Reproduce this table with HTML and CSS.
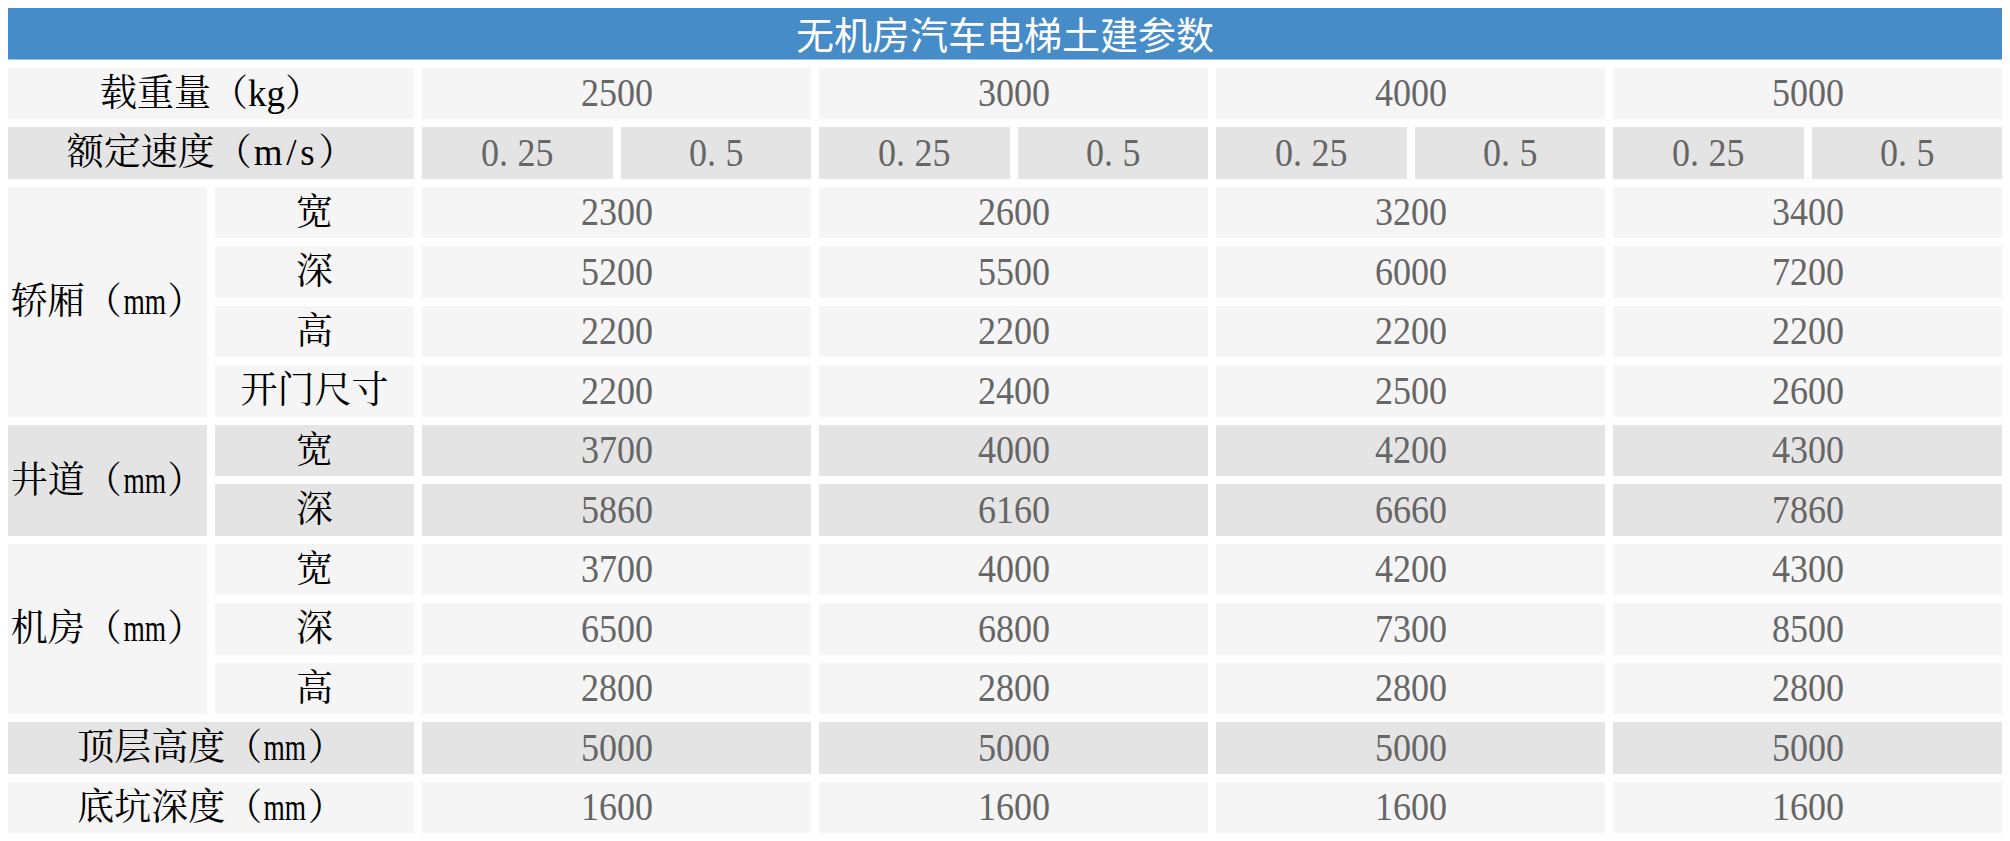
FILE: index.html
```html
<!DOCTYPE html>
<html lang="zh-CN">
<head>
<meta charset="utf-8">
<title>无机房汽车电梯土建参数</title>
<link rel="stylesheet" href="styles.css">
</head>
<body>
<div class="sheet">
  <div class="title">无机房汽车电梯土建参数</div>

  <div class="cell lbl light w2">载重量（kg）</div>
  <div class="cell val light w2"><span class="n">2500</span></div>
  <div class="cell val light w2"><span class="n">3000</span></div>
  <div class="cell val light w2"><span class="n">4000</span></div>
  <div class="cell val light w2"><span class="n">5000</span></div>

  <div class="cell lbl dark w2">额定速度（<span class="ms">m/s</span>）</div>
  <div class="cell val dark"><span class="n">0<span class="dot">.</span>25</span></div>
  <div class="cell val dark"><span class="n">0<span class="dot">.</span>5</span></div>
  <div class="cell val dark"><span class="n">0<span class="dot">.</span>25</span></div>
  <div class="cell val dark"><span class="n">0<span class="dot">.</span>5</span></div>
  <div class="cell val dark"><span class="n">0<span class="dot">.</span>25</span></div>
  <div class="cell val dark"><span class="n">0<span class="dot">.</span>5</span></div>
  <div class="cell val dark"><span class="n">0<span class="dot">.</span>25</span></div>
  <div class="cell val dark"><span class="n">0<span class="dot">.</span>5</span></div>

  <div class="cell lbl light h4">轿厢（<span class="mm">mm</span>）</div>
  <div class="cell lbl light">宽</div>
  <div class="cell val light w2"><span class="n">2300</span></div>
  <div class="cell val light w2"><span class="n">2600</span></div>
  <div class="cell val light w2"><span class="n">3200</span></div>
  <div class="cell val light w2"><span class="n">3400</span></div>
  <div class="cell lbl light">深</div>
  <div class="cell val light w2"><span class="n">5200</span></div>
  <div class="cell val light w2"><span class="n">5500</span></div>
  <div class="cell val light w2"><span class="n">6000</span></div>
  <div class="cell val light w2"><span class="n">7200</span></div>
  <div class="cell lbl light">高</div>
  <div class="cell val light w2"><span class="n">2200</span></div>
  <div class="cell val light w2"><span class="n">2200</span></div>
  <div class="cell val light w2"><span class="n">2200</span></div>
  <div class="cell val light w2"><span class="n">2200</span></div>
  <div class="cell lbl light">开门尺寸</div>
  <div class="cell val light w2"><span class="n">2200</span></div>
  <div class="cell val light w2"><span class="n">2400</span></div>
  <div class="cell val light w2"><span class="n">2500</span></div>
  <div class="cell val light w2"><span class="n">2600</span></div>

  <div class="cell lbl dark h2">井道（<span class="mm">mm</span>）</div>
  <div class="cell lbl dark">宽</div>
  <div class="cell val dark w2"><span class="n">3700</span></div>
  <div class="cell val dark w2"><span class="n">4000</span></div>
  <div class="cell val dark w2"><span class="n">4200</span></div>
  <div class="cell val dark w2"><span class="n">4300</span></div>
  <div class="cell lbl dark">深</div>
  <div class="cell val dark w2"><span class="n">5860</span></div>
  <div class="cell val dark w2"><span class="n">6160</span></div>
  <div class="cell val dark w2"><span class="n">6660</span></div>
  <div class="cell val dark w2"><span class="n">7860</span></div>

  <div class="cell lbl light h3">机房（<span class="mm">mm</span>）</div>
  <div class="cell lbl light">宽</div>
  <div class="cell val light w2"><span class="n">3700</span></div>
  <div class="cell val light w2"><span class="n">4000</span></div>
  <div class="cell val light w2"><span class="n">4200</span></div>
  <div class="cell val light w2"><span class="n">4300</span></div>
  <div class="cell lbl light">深</div>
  <div class="cell val light w2"><span class="n">6500</span></div>
  <div class="cell val light w2"><span class="n">6800</span></div>
  <div class="cell val light w2"><span class="n">7300</span></div>
  <div class="cell val light w2"><span class="n">8500</span></div>
  <div class="cell lbl light">高</div>
  <div class="cell val light w2"><span class="n">2800</span></div>
  <div class="cell val light w2"><span class="n">2800</span></div>
  <div class="cell val light w2"><span class="n">2800</span></div>
  <div class="cell val light w2"><span class="n">2800</span></div>

  <div class="cell lbl dark w2">顶层高度（<span class="mm">mm</span>）</div>
  <div class="cell val dark w2"><span class="n">5000</span></div>
  <div class="cell val dark w2"><span class="n">5000</span></div>
  <div class="cell val dark w2"><span class="n">5000</span></div>
  <div class="cell val dark w2"><span class="n">5000</span></div>

  <div class="cell lbl light w2">底坑深度（<span class="mm">mm</span>）</div>
  <div class="cell val light w2"><span class="n">1600</span></div>
  <div class="cell val light w2"><span class="n">1600</span></div>
  <div class="cell val light w2"><span class="n">1600</span></div>
  <div class="cell val light w2"><span class="n">1600</span></div>
</div>
</body>
</html>
```

FILE: styles.css
```css
html, body {
  margin: 0;
  padding: 0;
  background: #ffffff;
}

.sheet {
  box-sizing: border-box;
  width: 100%;
  height: 841px;
  padding: 8px;
  display: grid;
  grid-template-columns: 199px 199px repeat(8, 1fr);
  grid-template-rows: repeat(14, 1fr);
  gap: 8px;
}

.title {
  grid-column: 1 / -1;
  box-sizing: border-box;
  background: #468cc8;
  border-bottom: 1px solid #9cc3e6;
  color: #ffffff;
  font-family: "Noto Sans CJK SC", "Noto Sans", sans-serif;
  font-size: 38px;
  font-weight: 400;
  display: flex;
  align-items: center;
  justify-content: center;
  line-height: 1;
}

.cell {
  display: flex;
  align-items: center;
  justify-content: center;
  white-space: nowrap;
  line-height: 1;
}

.w2 { grid-column: span 2; }
.h2 { grid-row: span 2; }
.h3 { grid-row: span 3; }
.h4 { grid-row: span 4; }

.light { background: #f5f5f5; }
.dark { background: #e4e4e4; }

.lbl {
  color: #000000;
  font-family: "Liberation Serif", "Noto Serif CJK SC", "Noto Sans CJK SC", serif;
  font-size: 37px;
}

.mm {
  display: inline-block;
  transform: scaleX(0.74);
  transform-origin: left center;
  margin-right: -14px;
  padding-left: 2px;
}

.ms {
  letter-spacing: 0.1em;
  padding-left: 2px;
}

.val {
  color: #666666;
  font-family: "Liberation Serif", serif;
  font-size: 40px;
}

.n {
  display: inline-block;
  transform: scaleX(0.9);
}

.dot {
  letter-spacing: 0.26em;
}
```
